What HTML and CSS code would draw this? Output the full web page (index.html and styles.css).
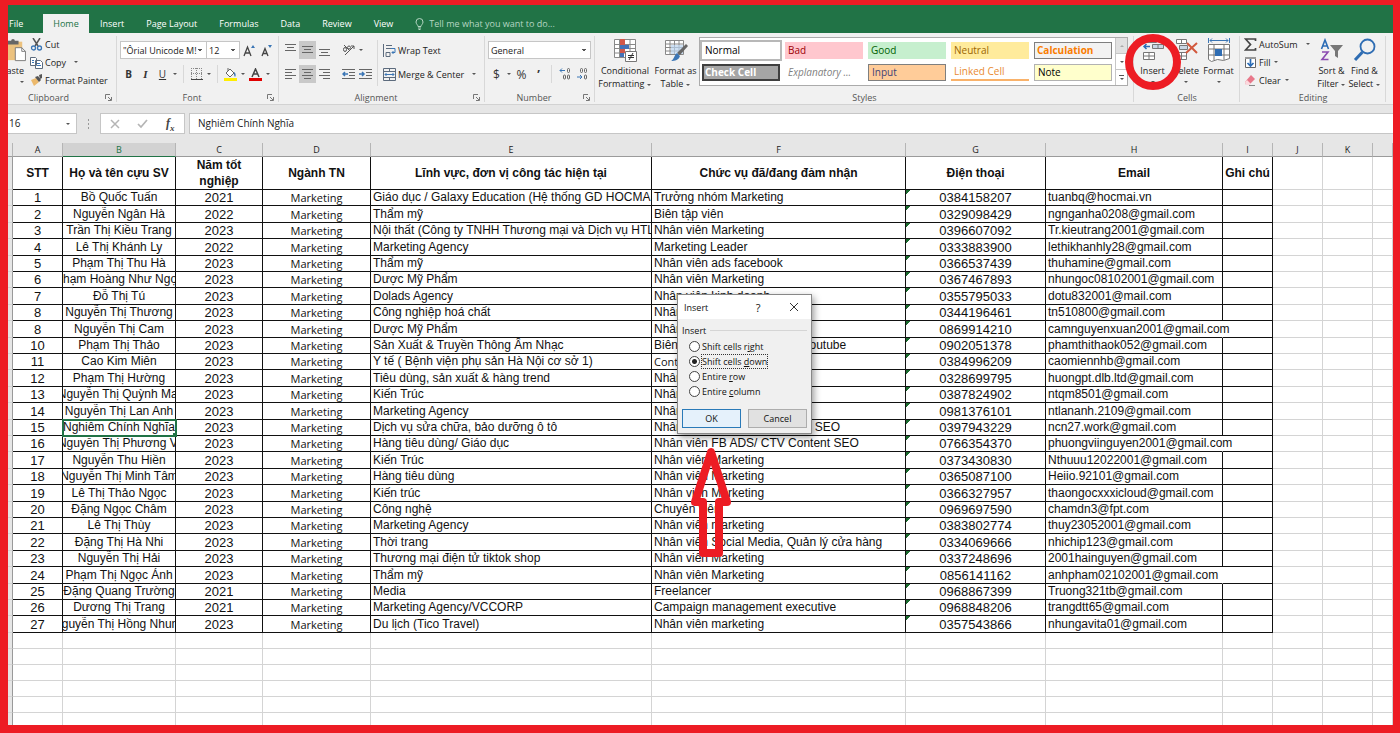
FILE: index.html
```html
<!DOCTYPE html>
<html lang="vi">
<head>
<meta charset="utf-8">
<title>Excel - Insert cells</title>
<link rel="stylesheet" href="styles.css">
</head>
<body>
<div class="frame">
<nav class="tabs">
<button class="tab file">File</button><button class="tab active">Home</button><button class="tab">Insert</button><button class="tab">Page Layout</button><button class="tab">Formulas</button><button class="tab">Data</button><button class="tab">Review</button><button class="tab">View</button>
<button class="tab tell"><svg width="9" height="12" viewBox="0 0 9 12" fill="none" stroke="#b5d6c3"><path d="M3 8.500C3 7 1 6 1 4a3.500 3.500 0 0 1 7 0c0 2-2 3-2 4.500zM3 10h3M3.500 11.500h2"/></svg>Tell me what you want to do...</button>
</nav>

<div class="ribbon">
<section class="group clipboard">
 <div class="body">
  <button class="big paste"><svg width="28" height="26" viewBox="0 0 28 26"><path fill="#ecc27f" d="M3 4h21v20H3z"/><path fill="#666" d="M8 3h4a2 2 0 0 1 4 0h4v4H8z"/><path fill="#fff" stroke="#777" d="M16.500 10.500h7l4 4v10h-11z"/><path fill="none" stroke="#777" d="M23.500 10.500v4h4"/></svg><span>Paste</span><i class="caret"></i></button>
  <div class="stack">
   <button class="small"><svg width="13" height="13" viewBox="0 0 13 13" fill="none"><path stroke="#555" stroke-width="1.500" d="M3 0l5 8M10 0L5 8"/><circle cx="3.500" cy="10" r="2" stroke="#3b76b5" stroke-width="1.300"/><circle cx="9.500" cy="10" r="2" stroke="#3b76b5" stroke-width="1.300"/></svg>Cut</button>
   <button class="small"><svg width="13" height="13" viewBox="0 0 13 13" fill="#fff" stroke="#5c6b7d"><path d="M.5 1.500h5l1 1v7h-6zM5.500 4.500h5l2 2v6h-7z"/><path stroke="#3b76b5" d="M2 4.500h2M2 6.500h2M7 7.500h3M7 9.500h4"/></svg>Copy<i class="caret gap"></i></button>
   <button class="small"><svg width="13" height="13" viewBox="0 0 13 13"><path fill="#ecb96c" d="M1 6l5-2 3 4-5 4z"/><path fill="#555" d="M5 3l3-1 3 4-2 2zM9 1l3-1v4l-2 1z"/></svg>Format Painter</button>
  </div>
 </div>
 <div class="label"><span>Clipboard</span><svg class="launch" width="7" height="7" viewBox="0 0 7 7"><path fill="none" stroke="#777" d="M.5 5V.5H5M3 3l3 3M6.500 3v3.500H3"/></svg></div>
</section>

<section class="group font">
 <div class="body rows">
  <div class="row">
   <select class="fontname" aria-label="Font"><option>"Ôrial Unicode M!</option></select><select class="fontsize" aria-label="Font size"><option>12</option></select>
   <button class="ib wide" aria-label="Increase font size"><svg width="13" height="13" viewBox="0 0 13 13" fill="none"><path stroke="#444" stroke-width="1.300" d="M1 12L4.500 3 8 12M2.500 9h4"/><path fill="#3b76b5" d="M8 4l2-3 2 3z"/></svg></button>
   <button class="ib" aria-label="Decrease font size"><svg width="13" height="13" viewBox="0 0 13 13" fill="none"><path stroke="#444" stroke-width="1.300" d="M2 12l3-7.500L8 12M3.500 9.500h3"/><path fill="#3b76b5" d="M8 1h4l-2 3z"/></svg></button>
  </div>
  <div class="row">
   <button class="ib"><b>B</b></button><button class="ib"><i class="it">I</i></button><button class="ib"><u>U</u></button><i class="caret"></i><i class="sep"></i>
   <button class="ib" aria-label="Borders"><svg width="12" height="12" viewBox="0 0 12 12" fill="none" stroke="#888"><path stroke-dasharray="1 1" d="M.5 0v11M5.500 0v11M10.500 0v11M0 .5h11M0 5.500h11"/><path stroke="#444" d="M0 11.500h12"/></svg></button><i class="caret"></i><i class="sep"></i>
   <button class="ib" aria-label="Fill color"><svg width="13" height="13" viewBox="0 0 13 13"><path fill="#fff" stroke="#666" d="M2 5l4-4 4 4-4 4z"/><path fill="none" stroke="#666" d="M4 3V0"/><path fill="#3b76b5" d="M10 4c2 1 2 4 1 5-1-1-1-3-1-5z"/><path fill="#ffee00" d="M0 10h13v3H0z"/></svg></button><i class="caret"></i>
   <button class="ib" aria-label="Font color"><svg width="13" height="13" viewBox="0 0 13 13"><path fill="none" stroke="#444" stroke-width="1.500" d="M3 9l3.500-8L10 9M4.500 6h4"/><path fill="#e00000" d="M0 10h13v3H0z"/></svg></button><i class="caret"></i>
  </div>
 </div>
 <div class="label"><span>Font</span><svg class="launch" width="7" height="7" viewBox="0 0 7 7"><path fill="none" stroke="#777" d="M.5 5V.5H5M3 3l3 3M6.500 3v3.500H3"/></svg></div>
</section>

<section class="group align">
 <div class="body">
  <div class="rows">
   <div class="row">
    <button class="ib" aria-label="Top align"><svg width="11" height="12" stroke="#666"><path d="M0 .5h11M2 3.500h7M0 6.500h11"/></svg></button><button class="ib on" aria-label="Middle align"><svg width="11" height="12" stroke="#666"><path d="M0 2.500h11M2 5.500h7M0 8.500h11"/></svg></button><button class="ib" aria-label="Bottom align"><svg width="11" height="12" stroke="#666"><path d="M0 5.500h11M2 8.500h7M0 11.500h11"/></svg></button>
    <button class="ib push" aria-label="Orientation"><svg width="13" height="12" viewBox="0 0 13 12" fill="none" stroke="#555"><path d="M3 11L12 2M12 5V2H9"/><ellipse cx="3" cy="5.500" rx="1.500" ry="2"/><path d="M2 1l6 6"/><circle cx="7" cy="3.500" r="1.500"/></svg></button><i class="caret"></i>
   </div>
   <div class="row">
    <button class="ib" aria-label="Align left"><svg width="11" height="12" stroke="#666"><path d="M0 1.500h11M0 4.500h7M0 7.500h11M0 10.500h7"/></svg></button><button class="ib on" aria-label="Center"><svg width="11" height="12" stroke="#666"><path d="M0 1.500h11M2 4.500h7M0 7.500h11M2 10.500h7"/></svg></button><button class="ib" aria-label="Align right"><svg width="11" height="12" stroke="#666"><path d="M0 1.500h11M4 4.500h7M0 7.500h11M4 10.500h7"/></svg></button>
    <button class="ib push" aria-label="Decrease indent"><svg width="13" height="11" fill="none"><path stroke="#666" d="M0 .5h13M7 3.500h6M7 6.500h6M0 9.500h13"/><path stroke="#3b76b5" stroke-width="1.500" d="M6 5H1M3 3L1 5l2 2"/></svg></button><button class="ib" aria-label="Increase indent"><svg width="13" height="11" fill="none"><path stroke="#666" d="M0 .5h13M7 3.500h6M7 6.500h6M0 9.500h13"/><path stroke="#3b76b5" stroke-width="1.500" d="M0 5h5M3 3l2 2-2 2"/></svg></button>
   </div>
  </div>
  <i class="sep tall"></i>
  <div class="rows">
   <div class="row"><button class="small"><svg width="13" height="13" viewBox="0 0 13 13" fill="none" stroke="#5c6b7d"><path d="M.5 0v13M3 1.500h6M3 4.500h5M3 8.500h4v4H3z"/><path stroke="#3b76b5" d="M8 4.500h4v4H9M10.500 7L9 8.500l1.500 1.500"/></svg>Wrap Text</button></div>
   <div class="row"><button class="small"><svg width="13" height="13" viewBox="0 0 13 13" fill="none" stroke="#5c6b7d"><path d="M.5.5h12v12H.5zM.5 3.500h12M.5 9.500h12M6.500.5v3M6.500 9.500v3"/><path stroke="#3b76b5" d="M2 6.500h9M3.500 5L2 6.500 3.500 8M9.500 5L11 6.500 9.500 8"/></svg>Merge &amp; Center<i class="caret gap"></i></button></div>
  </div>
 </div>
 <div class="label"><span>Alignment</span><svg class="launch" width="7" height="7" viewBox="0 0 7 7"><path fill="none" stroke="#777" d="M.5 5V.5H5M3 3l3 3M6.500 3v3.500H3"/></svg></div>
</section>

<section class="group number">
 <div class="body rows">
  <div class="row"><select class="fmt" aria-label="Number format"><option>General</option></select></div>
  <div class="row">
   <button class="ib sym">$</button><i class="caret"></i><button class="ib sym">%</button><button class="ib sym"><b>’</b></button><i class="sep"></i>
   <button class="ib" aria-label="Increase decimal"><svg width="12" height="12" viewBox="0 0 12 12" fill="none" stroke="#666"><path stroke="#3b76b5" d="M6 2.500H1M3 .5l-2 2 2 2"/><rect x="8.500" y=".5" width="2" height="4" rx="1"/><rect x="4.500" y="7" width="2" height="4" rx="1"/><rect x="8.500" y="7" width="2" height="4" rx="1"/></svg></button>
   <button class="ib" aria-label="Decrease decimal"><svg width="12" height="12" viewBox="0 0 12 12" fill="none" stroke="#666"><path stroke="#3b76b5" d="M1 9h5M4 7l2 2-2 2"/><rect x="8.500" y=".5" width="2" height="4" rx="1"/><rect x="4.500" y=".5" width="2" height="4" rx="1"/><rect x="8.500" y="7" width="2" height="4" rx="1"/></svg></button>
  </div>
 </div>
 <div class="label"><span>Number</span><svg class="launch" width="7" height="7" viewBox="0 0 7 7"><path fill="none" stroke="#777" d="M.5 5V.5H5M3 3l3 3M6.500 3v3.500H3"/></svg></div>
</section>

<section class="group styles">
 <div class="body">
  <button class="big w54"><svg width="24" height="24" viewBox="0 0 24 24"><path fill="#fff" stroke="#888" d="M1.500 1.500h21v18h-21zM6.500 1v18M17 1v18M1 6.500h21M1 10.500h21M1 15h21"/><path fill="#d2584a" d="M7 1h5v6H7zM7 11h5v4H7z"/><path fill="#4472b8" d="M7 7h9v4H7zM7 15h4v4H7z"/><path fill="#fff" stroke="#777" d="M12.500 13.500h11v10h-11z"/><path stroke="#333" d="M15 17.500h6M15 19.500h6M20 15l-4 7"/></svg><span>Conditional<br>Formatting <i class="caret"></i></span></button>
  <button class="big w47"><svg width="24" height="24" viewBox="0 0 24 24"><path fill="#fff" stroke="#888" d="M1.500 2.500h18v14h-18zM6 2v14M10.500 2v14M15 2v14M1 6h18M1 9.500h18M1 13h18"/><path fill="#b9d3ee" fill-opacity=".7" d="M7 7h12v9H7z"/><path fill="#666" d="M22 6l2 2-8 9-3-2z"/><path fill="#3b76b5" d="M13 15l3 3c-1 4-5 5-9 5 3-1 3-6 6-8z"/></svg><span>Format as<br>Table <i class="caret"></i></span></button>
  <div class="gallery">
   <div class="swatches">
    <button class="sw normal">Normal</button><button class="sw bad">Bad</button><button class="sw good">Good</button><button class="sw neutral">Neutral</button><button class="sw calc">Calculation</button>
    <button class="sw check">Check Cell</button><button class="sw expl">Explanatory ...</button><button class="sw input">Input</button><button class="sw linked">Linked Cell</button><button class="sw note">Note</button>
   </div>
   <div class="scroll"><button class="off" aria-label="Up"><i class="caret up"></i></button><button aria-label="Down"><i class="caret"></i></button><button class="more" aria-label="More"><i class="caret"></i></button></div>
  </div>
 </div>
 <div class="label"><span>Styles</span></div>
</section>

<section class="group cells">
 <div class="body">
  <button class="big w33"><svg width="24" height="24" viewBox="0 0 24 24"><path fill="#fff" stroke="#777" d="M4.500 1.500h11v3h-11zM10 1v4M2.500 14.500h11v7h-11zM8 14v8M2 18h12"/><path fill="#c9d6e4" stroke="#777" d="M11.500 6.500h11v4h-11zM17 6v5"/><path fill="none" stroke="#2b6cb5" stroke-width="1.500" d="M9 8.500H3M5.500 6L3 8.500 5.500 11"/></svg><span>Insert</span><i class="caret"></i></button>
  <button class="big w33"><svg width="24" height="24" viewBox="0 0 24 24"><path fill="#fff" stroke="#777" d="M2.500 1.500h10v4h-10zM7.500 1v5M2.500 14.500h10v7h-10zM7.500 14v8M2 18h11"/><path fill="#c9d6e4" stroke="#777" d="M5.500 7.500h8v4h-8z"/><path stroke="#d2583c" stroke-width="2" d="M13 5l10 10M23 5L12 15"/></svg><span>Delete</span><i class="caret"></i></button>
  <button class="big w33"><svg width="24" height="24" viewBox="0 0 24 24"><path fill="#fff" stroke="#777" d="M1.500 6.500h21v14l-6 2-6-1-6 2-3-2zM7 6v16M17 6v16M1 11h21M1 17h21"/><path fill="#2f6db3" d="M8 11h7v7H8z"/><path fill="none" stroke="#3b76b5" d="M3 2.500h18M5 .5l-2 2 2 2M19 .5l2 2-2 2M1.500 0v5M22.500 0v5"/></svg><span>Format</span><i class="caret"></i></button>
 </div>
 <div class="label"><span>Cells</span></div>
</section>

<section class="group editing">
 <div class="body">
  <div class="stack">
   <button class="small"><svg width="13" height="13" viewBox="0 0 13 13"><path fill="none" stroke="#444" stroke-width="1.700" d="M11.500 3V1H1.500l5 5.500-5 5.500h10v-2"/></svg>AutoSum<i class="caret gap"></i></button>
   <button class="small"><svg width="13" height="13" viewBox="0 0 13 13"><path fill="#fff" stroke="#666" d="M1.500 1.500h10v10h-10z"/><path fill="#999" d="M1 1h11v2H1z"/><path fill="none" stroke="#2b6cb5" stroke-width="1.700" d="M6.500 3v7M3.500 7l3 3 3-3"/></svg>Fill<i class="caret near"></i></button>
   <button class="small"><svg width="13" height="13" viewBox="0 0 13 13"><path fill="#e8788a" d="M7 1l4 4-6 6H2L1 8z"/><path fill="#fbd9de" d="M3 6l4 4-2 1H2L1 8z"/><path stroke="#888" d="M5 11.500h6"/></svg>Clear<i class="caret near"></i></button>
  </div>
  <button class="big w33"><svg width="24" height="24" viewBox="0 0 24 24" fill="none"><path stroke="#2b6cb5" stroke-width="1.600" d="M1.500 11L5 2l3.500 9M2.500 8h5"/><path stroke="#8a4bb0" stroke-width="1.600" d="M2 14h6l-6 7.500h6.500"/><path fill="#777" d="M10 7h13l-5 6v7l-3-2v-5z"/></svg><span>Sort &amp;<br>Filter <i class="caret"></i></span></button>
  <button class="big w33"><svg width="24" height="24" viewBox="0 0 24 24" fill="none" stroke="#2f6db3"><circle cx="14.500" cy="8.500" r="7" stroke-width="1.800"/><path stroke-width="3" d="M9.500 14L2 22"/></svg><span>Find &amp;<br>Select <i class="caret"></i></span></button>
 </div>
 <div class="label"><span>Editing</span></div>
</section>
</div>

<div class="fbar">
 <div class="namebox"><input aria-label="Name box" value="16"><i class="caret"></i></div>
 <svg class="dots" width="23" height="10" viewBox="0 0 23 10" fill="#999"><path d="M11 0h1v2h-1zM11 4h1v2h-1zM11 8h1v2h-1z"/></svg>
 <div class="fbtns">
  <button aria-label="Cancel"><svg width="10" height="10" stroke="#b5b5b5" stroke-width="1.500"><path d="M1 1l8 8M9 1L1 9"/></svg></button>
  <button aria-label="Enter"><svg width="11" height="10" fill="none" stroke="#b5b5b5" stroke-width="1.700"><path d="M1 5l3 3 6-7"/></svg></button>
  <button class="fx">f<small>x</small></button>
 </div>
 <input class="formula" aria-label="Formula" value="Nghiêm Chính Nghĩa">
</div>

<div class="sheet">
<table>
<colgroup><col class="c0"><col class="ca"><col class="cb"><col class="cc"><col class="cd"><col class="ce"><col class="cf"><col class="cg"><col class="ch"><col class="ci"><col class="ci"><col class="ci"><col></colgroup>
<thead><tr><th></th><th>A</th><th class="cur">B</th><th>C</th><th>D</th><th>E</th><th>F</th><th>G</th><th>H</th><th>I</th><th>J</th><th>K</th><th></th></tr></thead>
<tbody class="title"><tr><td><td>STT<td>Họ và tên cựu SV<td>Năm tốt nghiệp<td>Ngành TN<td>Lĩnh vực, đơn vị công tác hiện tại<td>Chức vụ đã/đang đảm nhận<td>Điện thoại<td>Email<td>Ghi chú<td><td><td></tr></tbody>
<tbody class="data">
<tr><td><td>1<td><div>Bồ Quốc Tuấn</div><td>2021<td>Marketing<td>Giáo dục / Galaxy Education (Hệ thống GD HOCMAI)<td>Trưởng nhóm Marketing<td>0384158207<td>tuanbq@hocmai.vn<td><td><td><td></tr>
<tr><td><td>2<td><div>Nguyễn Ngân Hà</div><td>2022<td>Marketing<td>Thẩm mỹ<td>Biên tập viên<td>0329098429<td>ngnganha0208@gmail.com<td><td><td><td></tr>
<tr><td><td>3<td><div>Trần Thị Kiều Trang</div><td>2023<td>Marketing<td>Nội thất (Công ty TNHH Thương mại và Dịch vụ HTL)<td>Nhân viên Marketing<td>0396607092<td>Tr.kieutrang2001@gmail.com<td><td><td><td></tr>
<tr><td><td>4<td><div>Lê Thị Khánh Ly</div><td>2022<td>Marketing<td>Marketing Agency<td>Marketing Leader<td>0333883900<td>lethikhanhly28@gmail.com<td><td><td><td></tr>
<tr><td><td>5<td><div>Phạm Thị Thu Hà</div><td>2023<td>Marketing<td>Thẩm mỹ<td>Nhân viên ads facebook<td>0366537439<td>thuhamine@gmail.com<td><td><td><td></tr>
<tr><td><td>6<td><div>Phạm Hoàng Như Ngọc</div><td>2023<td>Marketing<td>Dược Mỹ Phẩm<td>Nhân viên Marketing<td>0367467893<td>nhungoc08102001@gmail.com<td><td><td><td></tr>
<tr><td><td>7<td><div>Đỗ Thị Tú</div><td>2023<td>Marketing<td>Dolads Agency<td>Nhân viên kinh doanh<td>0355795033<td>dotu832001@mail.com<td><td><td><td></tr>
<tr><td><td>8<td><div>Nguyễn Thị Thương</div><td>2023<td>Marketing<td>Công nghiệp hoá chất<td>Nhân viên<td>0344196461<td>tn510800@gmail.com<td><td><td><td></tr>
<tr><td><td>8<td><div>Nguyễn Thị Cam</div><td>2023<td>Marketing<td>Dược Mỹ Phẩm<td>Nhân viên<td>0869914210<td class="spill">camnguyenxuan2001@gmail.com<td><td><td><td></tr>
<tr><td><td>10<td><div>Phạm Thị Thảo</div><td>2023<td>Marketing<td>Sản Xuất &amp; Truyền Thông Âm Nhạc<td>Biên tập nội dung cho kênh Youtube<td>0902051378<td>phamthithaok052@gmail.com<td><td><td><td></tr>
<tr><td><td>11<td><div>Cao Kim Miên</div><td>2023<td>Marketing<td>Y tế ( Bệnh viện phụ sản Hà Nội cơ sở 1)<td class="alt">Content<td>0384996209<td>caomiennhb@gmail.com<td><td><td><td></tr>
<tr><td><td>12<td><div>Phạm Thị Hường</div><td>2023<td>Marketing<td>Tiêu dùng, sản xuất &amp; hàng trend<td>Nhân viên<td>0328699795<td>huongpt.dlb.ltd@gmail.com<td><td><td><td></tr>
<tr><td><td>13<td><div>Nguyễn Thị Quỳnh Mai</div><td>2023<td>Marketing<td>Kiến Trúc<td>Nhân viên<td>0387824902<td>ntqm8501@gmail.com<td><td><td><td></tr>
<tr><td><td>14<td><div>Nguyễn Thị Lan Anh</div><td>2023<td>Marketing<td>Marketing Agency<td>Nhân viên<td>0981376101<td>ntlananh.2109@gmail.com<td><td><td><td></tr>
<tr><td><td>15<td class="selected"><div>Nghiêm Chính Nghĩa</div><td>2023<td>Marketing<td>Dịch vụ sửa chữa, bảo dưỡng ô tô<td>Nhân viên ADS/ CTV Content SEO<td>0397943229<td>ncn27.work@gmail.com<td><td><td><td></tr>
<tr><td><td>16<td><div>Nguyễn Thị Phương Vi</div><td>2023<td>Marketing<td>Hàng tiêu dùng/ Giáo dục<td>Nhân viên FB ADS/ CTV Content SEO<td>0766354370<td class="spill">phuongviinguyen2001@gmail.com<td><td><td><td></tr>
<tr><td><td>17<td><div>Nguyễn Thu Hiền</div><td>2023<td>Marketing<td>Kiến Trúc<td>Nhân viên Marketing<td>0373430830<td>Nthuuu12022001@gmail.com<td><td><td><td></tr>
<tr><td><td>18<td><div>Nguyễn Thị Minh Tâm</div><td>2023<td>Marketing<td>Hàng tiêu dùng<td>Nhân viên Marketing<td>0365087100<td>Heiio.92101@gmail.com<td><td><td><td></tr>
<tr><td><td>19<td><div>Lê Thị Thảo Ngọc</div><td>2023<td>Marketing<td>Kiến trúc<td>Nhân viên Marketing<td>0366327957<td>thaongocxxxicloud@gmail.com<td><td><td><td></tr>
<tr><td><td>20<td><div>Đặng Ngọc Châm</div><td>2023<td>Marketing<td>Công nghệ<td>Chuyên viên<td>0969697590<td>chamdn3@fpt.com<td><td><td><td></tr>
<tr><td><td>21<td><div>Lê Thị Thùy</div><td>2023<td>Marketing<td>Marketing Agency<td>Nhân viên marketing<td>0383802774<td>thuy23052001@gmail.com<td><td><td><td></tr>
<tr><td><td>22<td><div>Đặng Thị Hà Nhi</div><td>2023<td>Marketing<td>Thời trang<td>Nhân viên Social Media, Quản lý cửa hàng<td>0334069666<td>nhichip123@gmail.com<td><td><td><td></tr>
<tr><td><td>23<td><div>Nguyễn Thị Hải</div><td>2023<td>Marketing<td>Thương mại điện tử tiktok shop<td>Nhân viên Marketing<td>0337248696<td>2001hainguyen@gmail.com<td><td><td><td></tr>
<tr><td><td>24<td><div>Phạm Thị Ngọc Ánh</div><td>2023<td>Marketing<td>Thẩm mỹ<td>Nhân viên Marketing<td>0856141162<td class="spill">anhpham02102001@gmail.com<td><td><td><td></tr>
<tr><td><td>25<td><div>Đặng Quang Trường</div><td>2021<td>Marketing<td>Media<td>Freelancer<td>0968867399<td>Truong321tb@gmail.com<td><td><td><td></tr>
<tr><td><td>26<td><div>Dương Thị Trang</div><td>2021<td>Marketing<td>Marketing Agency/VCCORP<td>Campaign management executive<td>0968848206<td>trangdtt65@gmail.com<td><td><td><td></tr>
<tr><td><td>27<td><div>Nguyễn Thị Hồng Nhung</div><td>2023<td>Marketing<td>Du lịch (Tico Travel)<td>Nhân viên marketing<td>0357543866<td>nhungavita01@gmail.com<td><td><td><td></tr>
</tbody>
<tbody class="blank">
<tr><td><td><td><td><td><td><td><td><td><td><td><td><td></tr>
<tr><td><td><td><td><td><td><td><td><td><td><td><td><td></tr>
<tr><td><td><td><td><td><td><td><td><td><td><td><td><td></tr>
<tr><td><td><td><td><td><td><td><td><td><td><td><td><td></tr>
<tr><td><td><td><td><td><td><td><td><td><td><td><td><td></tr>
<tr><td><td><td><td><td><td><td><td><td><td><td><td><td></tr>
</tbody>
</table>
</div>
</div>

<form class="dialog" role="dialog" aria-label="Insert">
 <header><span>Insert</span><button type="button" class="help">?</button><button type="button" aria-label="Close"><svg width="10" height="10" stroke="#333"><path d="M1 1l8 8M9 1L1 9"/></svg></button></header>
 <div class="content">
  <div class="legend">Insert</div>
  <label><input type="radio" name="shift"><span>Shift cells r<u>i</u>ght</span></label>
  <label><input type="radio" name="shift" checked><span class="focus">Shift cells <u>d</u>own</span></label>
  <label><input type="radio" name="shift"><span>Entire <u>r</u>ow</span></label>
  <label><input type="radio" name="shift"><span>Entire <u>c</u>olumn</span></label>
  <div class="actions"><button type="button" class="ok">OK</button><button type="button">Cancel</button></div>
 </div>
</form>

<svg class="ring" width="58" height="58" viewBox="0 0 58 58"><circle cx="29" cy="29" r="24" fill="none" stroke="#ed1c24" stroke-width="8"/></svg>
<svg class="arrow" width="42" height="114" viewBox="0 0 42 114"><path d="M21 7L5 57h8v51h16V57h8z" fill="none" stroke="#ed1c24" stroke-width="8" stroke-linejoin="round"/></svg>
</body>
</html>
```
FILE: styles.css
```css
* { box-sizing: border-box; }
body { margin: 0; font: 9px/13px "Open Sans", "Noto Sans", sans-serif; color: #222; }
button, input, select { font: inherit; color: inherit; margin: 0; }
button { display: inline-flex; align-items: center; justify-content: center; padding: 0; border: 0; background: none; white-space: nowrap; }
svg { display: block; flex: none; }

.frame { display: flex; flex-direction: column; height: 100vh; overflow: hidden; border: solid #ed1c24; border-width: 5px 7px 8px 8px; background: #fff; }

.tabs { display: flex; flex: none; height: 28px; padding-top: 9px; background: #217346; }
.tab { padding: 0 11px; color: #fff; }
.tab.file { width: 35px; padding: 0 0 0 1px; justify-content: flex-start; }
.tab.active { width: 46px; padding: 0; background: #f1f1f1; color: #217346; }
.tab.tell { gap: 5px; color: #b5d6c3; }

.ribbon { display: flex; flex: none; height: 72px; padding-right: 7px; background: #f1f1f1; border-bottom: 1px solid #d2d2d2; }
.group { display: flex; flex: none; flex-direction: column; padding-top: 2px; background: linear-gradient(#d8d8d8, #d8d8d8) right 3px / 1px 66px no-repeat; }
.clipboard { width: 109px; }
.font { width: 162px; }
.align { width: 206px; }
.number { width: 110px; }
.styles { flex: 1; min-width: 0; }
.cells { width: 106px; }
.editing { width: 146px; }
.body { display: flex; height: 56px; padding-left: 3px; }
.clipboard .body { padding-left: 0; }
.label { display: flex; align-items: center; height: 13px; color: #555; }
.label span { flex: 1; text-align: center; }
.clipboard .label span { padding-right: 16px; }
.launch { margin-right: 5px; }
.stack { display: flex; flex-direction: column; align-items: flex-start; }
.small { height: 18px; gap: 2px; }
.rows { display: flex; flex-direction: column; gap: 6px; padding-top: 6px; }
.row { display: flex; height: 18px; align-items: center; }
.row .small { padding-left: 2px; }
.ib { width: 17px; height: 18px; font-size: 10px; color: #333; }
.ib.on { background: #c9c9c9; }
.ib.push { margin-left: 7px; }
.ib.wide { margin-left: 1px; }
.it { font-family: "Liberation Serif", serif; font-style: italic; font-weight: bold; font-size: 11px; }
.sym { font-size: 12px; }
.caret { display: inline-flex; flex: none; width: 8px; align-items: center; justify-content: center; vertical-align: middle; }
.caret::before { content: ""; border: 2px solid transparent; border-top-color: #555; border-bottom: 0; }
.caret.up::before { border: 2px solid transparent; border-bottom-color: #aaa; border-top: 0; }
.caret.gap { margin-left: 4px; }
.big .caret { width: 5px; }
.sep { flex: none; width: 9px; height: 18px; background: linear-gradient(#d8d8d8, #d8d8d8) center / 1px 100% no-repeat; }
.sep.tall { width: 7px; height: 46px; margin-top: 5px; }
select { appearance: none; height: 18px; padding: 0 2px; border: 1px solid #c6c6c6; border-radius: 0; background: linear-gradient(45deg, transparent 50%, #555 50%) right 6px center / 2px 2px no-repeat, linear-gradient(-45deg, transparent 50%, #555 50%) right 4px center / 2px 2px no-repeat, #fff; }
.fontname { width: 87px; margin-right: -1px; }
.fontsize { width: 34px; }
.fmt { width: 103px; }

.big { flex-direction: column; justify-content: flex-start; padding-top: 3px; gap: 2px; height: 56px; line-height: 13px; text-align: center; }
.big > .caret { height: 11px; margin-top: -3px; }
.paste { width: 22px; padding-right: 6px; align-items: flex-end; overflow: hidden; }
.paste svg { height: 24px; margin-right: -3px; }
.w54 { width: 54px; }
.w47 { width: 47px; }
.w33 { width: 33px; }
.cells .body { padding-left: 2px; }
.editing .body { padding-right: 5px; }
.editing .stack { flex: 1; padding-left: 1px; }

.gallery { display: flex; flex: 1; height: 49px; margin: 2px 6px 0 0; border: 1px solid #ababab; background: #fff; }
.swatches { display: grid; flex: 1; grid-template-columns: repeat(5, 1fr); gap: 5px; padding: 4px 3px 4px 2px; }
.sw { justify-content: flex-start; height: 17px; padding-left: 3px; font-size: 10px; overflow: hidden; }
.normal { color: #000; outline: 2px solid #b8b8b8; }
.bad { background: #ffc7ce; color: #9c0006; }
.good { background: #c6efce; color: #006100; }
.neutral { background: #ffeb9c; color: #9c6500; }
.calc { padding-left: 2px; border: 1px solid #7f7f7f; background: #f2f2f2; color: #fa7d00; font-weight: bold; }
.check { padding-left: 1px; border: 2px solid #3f3f3f; background: #a5a5a5; color: #fff; font-weight: bold; }
.expl { color: #7f7f7f; font-style: italic; }
.input { border: 1px solid #7f7f7f; background: #ffcc99; color: #3f3f76; }
.linked { border-bottom: 2px solid #f9b26a; color: #e88a30; }
.note { border: 1px solid #b2b2b2; background: #ffffcc; color: #000; }
.scroll { display: flex; flex-direction: column; width: 12px; border-left: 1px solid #c6c6c6; }
.scroll button { flex: 1; border-bottom: 1px solid #c6c6c6; }
.scroll .off { background: #e1e1e1; }
.scroll .more { flex-direction: column; border: 0; }
.scroll .more::before { content: ""; width: 5px; margin-bottom: 2px; border-top: 1px solid #555; }

.fbar { display: flex; flex: none; height: 38px; padding: 8px 0 9px; background: #e6e6e6; font-size: 10px; }
.fbar input { min-width: 0; border: 0; background: #fff; outline: 0; }
.namebox { display: flex; align-items: center; width: 69px; padding-right: 4px; border: 1px solid #c6c6c6; border-left: 0; background: #fff; }
.namebox input { flex: 1; padding: 0 1px; }
.dots { align-self: center; }
.fbtns { display: flex; width: 85px; border: 1px solid #c6c6c6; background: #fff; }
.fbtns button { flex: 1; }
.fx { font: italic bold 12px "Liberation Serif", serif; color: #444; }
.fx small { font-size: 9px; align-self: flex-end; }
.fbar .formula { flex: 1; margin-left: 4px; padding: 0 8px; border: 1px solid #c6c6c6; border-right: 0; }

.sheet { flex: 1; overflow: hidden; }
table { width: 100%; table-layout: fixed; border-collapse: separate; border-spacing: 0; font: 12px/15px "Liberation Sans", Arial, sans-serif; color: #111; }
.c0 { width: 5px; }
.ca, .ci { width: 50px; }
.cb { width: 113px; }
.cc { width: 87px; }
.cd { width: 108px; }
.ce { width: 281px; }
.cf { width: 254px; }
.cg { width: 140px; }
.ch { width: 177px; }
th { height: 14px; padding: 0; border-right: 1px solid #b5b5b5; border-bottom: 1px solid #9b9b9b; background: #e6e6e6; font: 9px/12px "Open Sans", sans-serif; color: #222; }
th.cur { border-bottom-color: #217346; background: #d2d2d2; color: #217346; }
td { height: 16px; padding: 0; border-right: 1px solid #d4d4d4; border-bottom: 1px solid #d4d4d4; text-align: center; white-space: nowrap; }
td:first-child { border-right-color: #999; background: #e6e6e6; }
.title td { height: 33px; font-weight: bold; white-space: normal; line-height: 16px; }
.title td:nth-child(n+2):nth-child(-n+10), .data td:nth-child(n+2):nth-child(-n+10) { border-color: #111; }
.data tr:nth-child(5n+2) td, .data tr:nth-child(5n+4) td { height: 17px; }
.data td:nth-child(2), .data td:nth-child(4), .data td:nth-child(8) { font-size: 13px; }
.data td:nth-child(3) div { display: flex; justify-content: center; overflow: hidden; }
.data td:nth-child(5), .data td.alt { font: 11px/15px "Open Sans", sans-serif; }
.data td:nth-child(6), .data td:nth-child(7), .data td:nth-child(9) { padding-left: 2px; text-align: left; }
.data td:nth-child(6) { overflow: hidden; }
.data td:nth-child(8) { background: linear-gradient(135deg, #1a6b2e 3px, transparent 3px); }
.data td.spill:nth-child(9) { border-right-color: transparent; }
.data td.selected { position: relative; outline: 2px solid #217346; outline-offset: -1px; }
.selected::after { content: ""; position: absolute; right: -2px; bottom: -2px; width: 4px; height: 4px; background: #217346; }

.dialog { position: absolute; left: 677px; top: 294px; width: 135px; border: 1px solid #888; background: #f0f0f0; box-shadow: 2px 3px 7px rgba(0, 0, 0, .4); color: #111; }
.dialog header { display: flex; align-items: center; height: 24px; padding: 0 6px; background: #fff; }
.dialog header span { flex: 1; }
.dialog header button { width: 22px; height: 22px; }
.dialog header .help { margin-right: 14px; font-size: 11px; }
.content { padding: 5px 4px 5px; }
.legend { display: flex; align-items: center; gap: 4px; margin-bottom: 2px; }
.legend::after { content: ""; flex: 1; border-top: 1px solid #d5d5d5; }
.dialog label { display: flex; align-items: center; height: 15px; padding-left: 7px; gap: 2px; }
.dialog input { appearance: none; width: 11px; height: 11px; border: 1px solid #444; border-radius: 50%; background: #fff; }
.dialog input:checked { background: radial-gradient(circle, #222 0 2px, #fff 3px); }
.focus { outline: 1px dotted #333; }
.actions { display: flex; gap: 7px; margin-top: 10px; }
.actions button { flex: 1; height: 19px; border: 1px solid #adadad; background: #e1e1e1; }
.actions .ok { border-color: #2a7ab8; background: #e5f1fb; }

.ring { position: absolute; left: 1124px; top: 33px; }
.arrow { position: absolute; left: 690px; top: 445px; }
```
